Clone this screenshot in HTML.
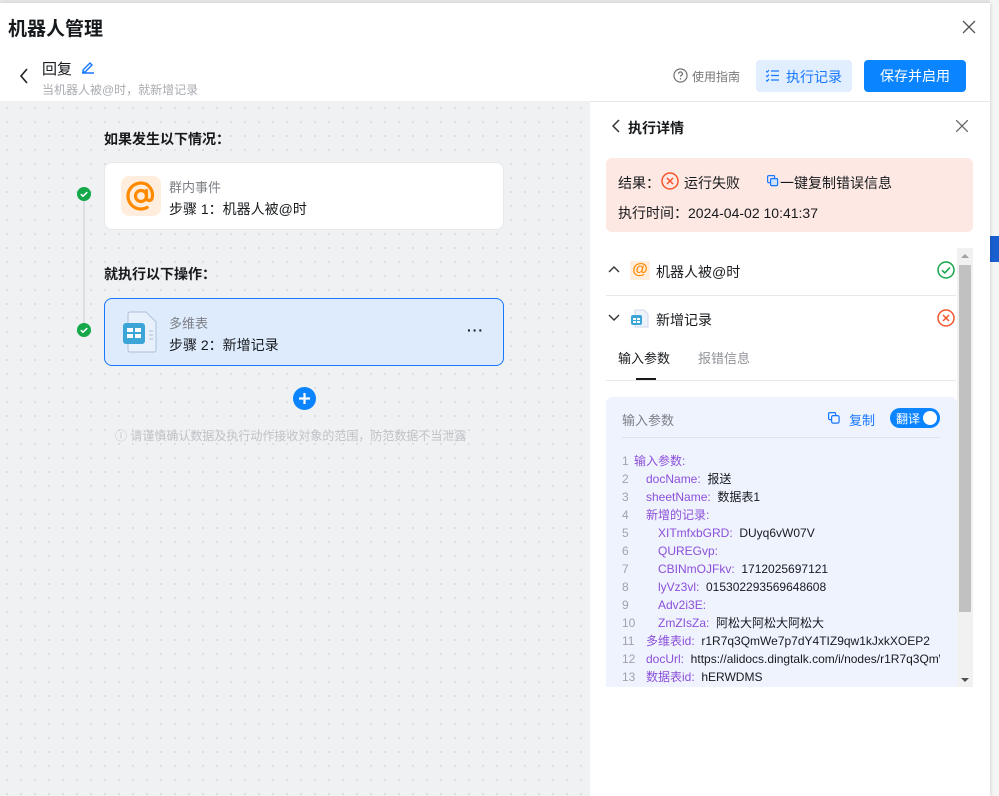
<!DOCTYPE html>
<html><head><meta charset="utf-8"><style>
*{box-sizing:border-box;margin:0;padding:0}
body{width:999px;height:796px;overflow:hidden;background:#fff;font-family:"Liberation Sans","Noto Sans CJK SC",sans-serif;color:#171a1d;position:relative}
.abs{position:absolute}
.bgpage{left:990px;top:0;width:9px;height:796px;background:#f5f5f5}
.modal{left:0;top:3px;width:990px;height:793px;background:#fff;box-shadow:1px 0 3px rgba(0,0,0,.12)}
.canvas{left:0;top:101px;width:590px;height:695px;background-color:#f0f1f3;background-image:radial-gradient(#dcdde0 1px,transparent 1.2px);background-size:14px 14px}
.card{background:#fff;border-radius:8px;border:1px solid #e8e9eb}
.t14{font-size:14px}
.code div{height:18px;line-height:18px;font-size:12px;white-space:nowrap;position:relative}
.ln{color:#a0a3a8;position:absolute;left:0;top:0}
.k{color:#8c4fd9}
.l0{padding-left:12px}.l1{padding-left:24px}.l2{padding-left:36px}
</style></head><body>
<div class="abs bgpage"></div>
<div class="abs" style="left:990px;top:236px;width:9px;height:26px;background:#1a5fd0"></div>
<div class="abs" style="left:0;top:0;width:990px;height:3px;background:#e6e6e6"></div>
<div class="abs modal"></div>
<div class="abs" style="left:8px;top:14px;font-size:19px;font-weight:bold">机器人管理</div>
<svg class="abs" style="left:962px;top:20px" width="14" height="14" viewBox="0 0 14 14"><path d="M1 1L13 13M13 1L1 13" stroke="#555" stroke-width="1.3"/></svg>
<svg class="abs" style="left:19px;top:68px" width="10" height="16" viewBox="0 0 10 16"><path d="M8 1L2 8l6 7" stroke="#222" stroke-width="1.6" fill="none"/></svg>
<div class="abs" style="left:42px;top:58px;font-size:15px">回复</div>
<svg class="abs" style="left:81px;top:60px" width="14" height="14" viewBox="0 0 14 14"><path d="M2 10l7-7 2 2-7 7H2zM1 13h12" stroke="#1677ff" stroke-width="1.4" fill="none"/></svg>
<div class="abs" style="left:42px;top:81px;font-size:12px;color:#a8abb0">当机器人被@时，就新增记录</div>
<svg class="abs" style="left:673px;top:68px" width="15" height="15" viewBox="0 0 16 16"><circle cx="8" cy="8" r="7" stroke="#666" stroke-width="1.2" fill="none"/><path d="M6 6.2a2 2 0 1 1 2.6 1.9c-.5.2-.6.5-.6 1.2" stroke="#666" stroke-width="1.2" fill="none"/><circle cx="8" cy="11.5" r=".8" fill="#666"/></svg>
<div class="abs" style="left:692px;top:68px;font-size:12px;color:#777">使用指南</div>
<div class="abs" style="left:756px;top:60px;width:96px;height:32px;background:#e0eeff;border-radius:4px"></div>
<svg class="abs" style="left:766px;top:69px" width="13" height="13" viewBox="0 0 13 13"><path d="M5 2h8M5 6.5h8M5 11h8" stroke="#1677ff" stroke-width="1.3"/><path d="M0 2l1.2 1.2L3 1M0 6.5l1.2 1.2L3 5.5M0 11l1.2 1.2L3 10" stroke="#1677ff" stroke-width="1.1" fill="none"/></svg>
<div class="abs t14" style="left:786px;top:67px;color:#1677ff">执行记录</div>
<div class="abs" style="left:864px;top:60px;width:102px;height:32px;background:#0a84ff;border-radius:4px;color:#fff;font-size:14px;line-height:32px;text-align:center">保存并启用</div>
<div class="abs" style="left:0;top:101px;width:990px;height:1px;background:#e8e8e8"></div>
<div class="abs canvas"></div>
<div class="abs t14" style="left:104px;top:129px;font-weight:bold">如果发生以下情况：</div>
<div class="abs" style="left:83px;top:195px;width:2px;height:136px;background:#dcdde0"></div>
<svg class="abs" style="left:77px;top:187px" width="14" height="14"><circle cx="7" cy="7" r="7" fill="#14a84a"/><path d="M3.8 7.2l2.2 2 4.2-4" stroke="#fff" stroke-width="1.6" fill="none"/></svg>
<svg class="abs" style="left:77px;top:323px" width="14" height="14"><circle cx="7" cy="7" r="7" fill="#14a84a"/><path d="M3.8 7.2l2.2 2 4.2-4" stroke="#fff" stroke-width="1.6" fill="none"/></svg>
<div class="abs card" style="left:104px;top:162px;width:400px;height:68px"></div>
<div class="abs" style="left:121px;top:176px;width:40px;height:40px;background:#ffeedd;border-radius:8px"></div>
<svg class="abs" style="left:121px;top:176px" width="40" height="40" viewBox="0 0 40 40"><circle cx="20" cy="20" r="5.5" stroke="#ff8a00" stroke-width="3.2" fill="none"/><path d="M25.5 14.5v7.5c0 3 4.5 3.5 5.5 0.5C33 15 28 7 20 7 12.8 7 7 12.8 7 20s5.8 13 13 13c2.5 0 4.5-.6 6.2-1.6" stroke="#ff8a00" stroke-width="3.2" fill="none" stroke-linecap="round"/></svg>
<div class="abs" style="left:169px;top:177px;font-size:13px;color:#7d8085">群内事件</div>
<div class="abs t14" style="left:169px;top:199px">步骤 1：机器人被@时</div>
<div class="abs t14" style="left:104px;top:264px;font-weight:bold">就执行以下操作：</div>
<div class="abs" style="left:104px;top:298px;width:400px;height:68px;background:#ddebfd;border:1px solid #1677ff;border-radius:8px"></div>
<svg class="abs" style="left:122px;top:311px" width="36" height="42" viewBox="0 0 36 42"><path d="M8 1h16l10 10v28a2 2 0 0 1-2 2H8a2 2 0 0 1-2-2V3a2 2 0 0 1 2-2z" fill="#e8f0fb" stroke="#b7c7e0" stroke-width="1.2"/><path d="M27 20h4M27 24h4M27 28h4" stroke="#b7c7e0" stroke-width="1.2"/><rect x="1" y="12" width="22" height="21" rx="3" fill="#3aa5d6"/><rect x="5" y="17" width="6" height="4" fill="#fff"/><rect x="13" y="17" width="6" height="4" fill="#fff"/><rect x="5" y="23" width="6" height="4" fill="#fff"/><rect x="13" y="23" width="6" height="4" fill="#fff"/></svg>
<div class="abs" style="left:169px;top:313px;font-size:13px;color:#7d8085">多维表</div>
<div class="abs t14" style="left:169px;top:335px">步骤 2：新增记录</div>
<div class="abs" style="left:467px;top:322px;font-size:14px;font-weight:bold;letter-spacing:1px">···</div>
<svg class="abs" style="left:293px;top:387px" width="23" height="23"><circle cx="11.5" cy="11.5" r="11.5" fill="#0a84ff"/><path d="M11.5 6v11M6 11.5h11" stroke="#fff" stroke-width="2.2"/></svg>
<div class="abs" style="left:115px;top:427px;font-size:12px;color:#bfc1c5">ⓘ 请谨慎确认数据及执行动作接收对象的范围，防范数据不当泄露</div>
<svg class="abs" style="left:612px;top:119px" width="8" height="14" viewBox="0 0 8 14"><path d="M7 1L1 7l6 6" stroke="#333" stroke-width="1.5" fill="none"/></svg>
<div class="abs t14" style="left:628px;top:118px;font-weight:bold">执行详情</div>
<svg class="abs" style="left:956px;top:120px" width="12" height="12"><path d="M0 0L12 12M12 0L0 12" stroke="#666" stroke-width="1.3"/></svg>
<div class="abs" style="left:606px;top:158px;width:367px;height:74px;background:#fde8e3;border-radius:6px"></div>
<div class="abs t14" style="left:618px;top:173px">结果：</div>
<svg class="abs" style="left:661px;top:172px" width="18" height="18"><circle cx="9" cy="9" r="8" stroke="#f5542c" stroke-width="1.5" fill="none"/><path d="M6 6l6 6M12 6l-6 6" stroke="#f5542c" stroke-width="1.5"/></svg>
<div class="abs t14" style="left:684px;top:173px">运行失败</div>
<svg class="abs" style="left:767px;top:175px" width="12" height="12"><rect x="0.6" y="0.6" width="7" height="7" rx="1" stroke="#1677ff" fill="none" stroke-width="1.2"/><rect x="3.6" y="3.6" width="7" height="7" rx="1" stroke="#1677ff" fill="#cfe3ff" stroke-width="1.2"/></svg>
<div class="abs t14" style="left:780px;top:173px">一键复制错误信息</div>
<div class="abs t14" style="left:618px;top:203px">执行时间：2024-04-02 10:41:37</div>
<svg class="abs" style="left:608px;top:265px" width="12" height="8"><path d="M1 7l5-5 5 5" stroke="#333" stroke-width="1.4" fill="none"/></svg>
<div class="abs" style="left:630px;top:261px;width:20px;height:19px;background:#ffeedd;color:#ff8a00;font-size:16px;line-height:18px;text-align:center;font-weight:bold">@</div>
<div class="abs t14" style="left:656px;top:262px">机器人被@时</div>
<svg class="abs" style="left:937px;top:261px" width="18" height="18"><circle cx="9" cy="9" r="8" stroke="#14a84a" stroke-width="1.5" fill="none"/><path d="M5 9.3l2.8 2.6L13 6.5" stroke="#14a84a" stroke-width="1.6" fill="none"/></svg>
<div class="abs" style="left:606px;top:295px;width:350px;height:1px;background:#e8e8e8"></div>
<svg class="abs" style="left:608px;top:314px" width="12" height="8"><path d="M1 1l5 5 5-5" stroke="#333" stroke-width="1.4" fill="none"/></svg>
<svg class="abs" style="left:630px;top:309px" width="20" height="20" viewBox="0 0 20 20"><path d="M5 1h9l4 4v13H5z" fill="#eef3fb" stroke="#cfdaea"/><rect x="1" y="6" width="11" height="10" rx="2" fill="#3aa5d6"/><rect x="3" y="9" width="3" height="2" fill="#fff"/><rect x="7" y="9" width="3" height="2" fill="#fff"/><rect x="3" y="12" width="3" height="2" fill="#fff"/><rect x="7" y="12" width="3" height="2" fill="#fff"/></svg>
<div class="abs t14" style="left:656px;top:310px">新增记录</div>
<svg class="abs" style="left:937px;top:309px" width="18" height="18"><circle cx="9" cy="9" r="8" stroke="#f5542c" stroke-width="1.5" fill="none"/><path d="M6 6l6 6M12 6l-6 6" stroke="#f5542c" stroke-width="1.5"/></svg>
<div class="abs" style="left:618px;top:348px;font-size:13px">输入参数</div>
<div class="abs" style="left:698px;top:348px;font-size:13px;color:#8f9297">报错信息</div>
<div class="abs" style="left:636px;top:378px;width:20px;height:3px;background:#171a1d"></div>
<div class="abs" style="left:606px;top:380px;width:350px;height:1px;background:#e8e8e8"></div>
<div class="abs" style="left:606px;top:397px;width:351px;height:290px;background:#eef3fe;border-radius:6px 6px 0 0"></div>
<div class="abs" style="left:622px;top:410px;font-size:13px;color:#7d8085">输入参数</div>
<svg class="abs" style="left:828px;top:412px" width="12" height="12"><rect x="0.6" y="0.6" width="7" height="7" rx="1" stroke="#1677ff" fill="none" stroke-width="1.2"/><rect x="3.6" y="3.6" width="7.5" height="7.5" rx="1.5" stroke="#1677ff" fill="#eef3fe" stroke-width="1.2"/></svg>
<div class="abs" style="left:849px;top:410px;font-size:13px;color:#1677ff">复制</div>
<div class="abs" style="left:890px;top:408px;width:50px;height:20px;background:#0a84ff;border-radius:10px"></div>
<div class="abs" style="left:896px;top:410px;font-size:12px;color:#fff">翻译</div>
<div class="abs" style="left:923px;top:411px;width:14px;height:14px;background:#fff;border-radius:50%"></div>
<div class="abs" style="left:622px;top:437px;width:318px;height:1px;background:#dde3ee"></div>
<div class="abs code" style="left:622px;top:452px;width:318px;overflow:hidden">
<div class="l0"><span class="ln">1</span><span class="k">输入参数:</span></div>
<div class="l1"><span class="ln">2</span><span class="k">docName:</span>&nbsp; 报送</div>
<div class="l1"><span class="ln">3</span><span class="k">sheetName:</span>&nbsp; 数据表1</div>
<div class="l1"><span class="ln">4</span><span class="k">新增的记录:</span></div>
<div class="l2"><span class="ln">5</span><span class="k">XITmfxbGRD:</span>&nbsp; DUyq6vW07V</div>
<div class="l2"><span class="ln">6</span><span class="k">QUREGvp:</span></div>
<div class="l2"><span class="ln">7</span><span class="k">CBINmOJFkv:</span>&nbsp; 1712025697121</div>
<div class="l2"><span class="ln">8</span><span class="k">lyVz3vl:</span>&nbsp; 015302293569648608</div>
<div class="l2"><span class="ln">9</span><span class="k">Adv2i3E:</span></div>
<div class="l2"><span class="ln">10</span><span class="k">ZmZIsZa:</span>&nbsp; 阿松大阿松大阿松大</div>
<div class="l1"><span class="ln">11</span><span class="k">多维表id:</span>&nbsp; r1R7q3QmWe7p7dY4TIZ9qw1kJxkXOEP2</div>
<div class="l1"><span class="ln">12</span><span class="k">docUrl:</span>&nbsp; https://alidocs.dingtalk.com/i/nodes/r1R7q3QmWe7p</div>
<div class="l1"><span class="ln">13</span><span class="k">数据表id:</span>&nbsp; hERWDMS</div>
</div>
<div class="abs" style="left:957px;top:248px;width:16px;height:439px;background:#f1f1f1"></div>
<div class="abs" style="left:959px;top:265px;width:12px;height:347px;background:#c1c1c1"></div>
<svg class="abs" style="left:960px;top:253px" width="10" height="6"><path d="M1 5l4-4 4 4z" fill="#a3a3a3"/></svg>
<svg class="abs" style="left:960px;top:677px" width="10" height="6"><path d="M1 1l4 4 4-4z" fill="#505050"/></svg>
</body></html>
